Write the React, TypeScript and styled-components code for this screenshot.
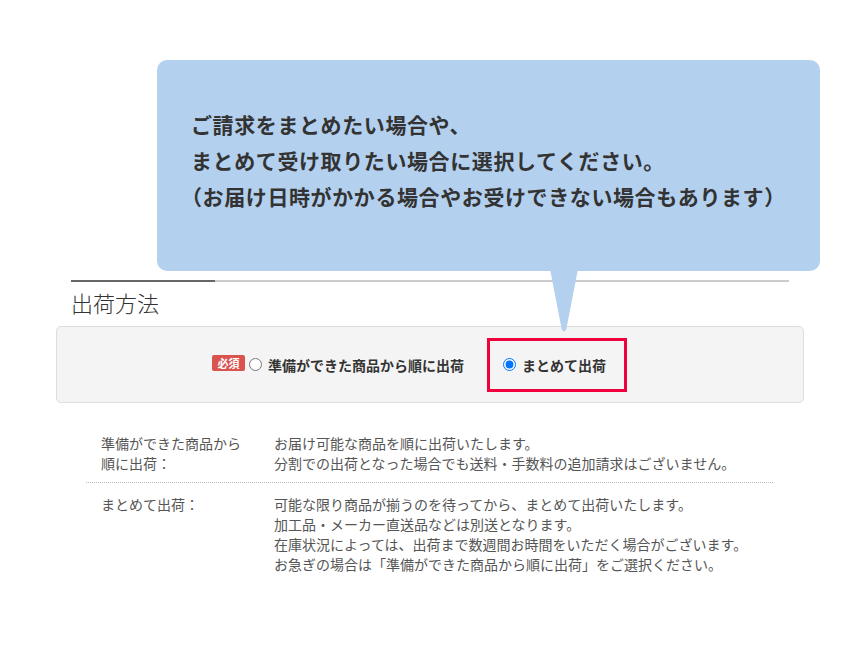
import React from "react";
import styled, { createGlobalStyle } from "styled-components";

const GlobalStyle = createGlobalStyle`
  html, body {
    margin: 0;
    padding: 0;
    background: #fff;
  }
  body {
    font-family: "Noto Sans CJK JP", "Noto Sans", sans-serif;
    color: #333;
  }
`;

const Page = styled.div`
  width: 860px;
  padding-top: 60px;
`;

const Bubble = styled.div`
  position: relative;
  margin-left: 157px;
  width: 663px;
  height: 211px;
  box-sizing: border-box;
  padding: 46px 0 0 34px;
  background: #b3d0ee;
  border-radius: 10px;
  font-size: 21px;
  font-weight: 700;
  line-height: 36px;
  color: #333;
  letter-spacing: 0.6px;
`;

const BubbleLine = styled.p<{ $paren?: boolean }>`
  margin: 0 0 0 ${({ $paren }) => ($paren ? "-10px" : "0")};
  white-space: nowrap;
`;

const Tail = styled.div`
  position: absolute;
  left: 393px;
  top: 209px;
  width: 28px;
  height: 63px;
  background: #b3d0ee;
  clip-path: polygon(0 0, 100% 0, 58% 96%, 50% 100%, 42% 96%);
`;

const Section = styled.section`
  margin: 9px 0 0 71px;
  width: 718px;
`;

const HeadLine = styled.div`
  height: 2px;
  background: linear-gradient(to right, #666 0 144px, #ccc 144px 100%);
`;

const Heading = styled.h2`
  margin: 0;
  padding-top: 2px;
  font-size: 22px;
  font-weight: 300;
  line-height: 36px;
  color: #333;
`;

const OptionBox = styled.div`
  margin: 6px 0 0 56px;
  width: 748px;
  height: 77px;
  box-sizing: border-box;
  background: #f4f4f4;
  border: 1px solid #ddd;
  border-radius: 5px;
  display: flex;
  align-items: center;
  padding-left: 155px;
`;

const Required = styled.span`
  display: inline-flex;
  align-items: center;
  justify-content: center;
  width: 33px;
  height: 16px;
  margin-top: -3px;
  background: #d9534f;
  border-radius: 2px;
  color: #fff;
  font-size: 11px;
  font-weight: 700;
  line-height: 1;
`;

const Choice = styled.label<{ $highlight?: boolean }>`
  display: flex;
  align-items: center;
  gap: 3px;
  font-size: 14px;
  font-weight: 700;
  color: #333;
  box-sizing: border-box;
  ${({ $highlight }) =>
    $highlight
      ? `
    margin-left: 23px;
    height: 54px;
    width: 140px;
    padding-left: 13px;
    border: 3px solid #f0003c;
  `
      : `
    margin-left: 4px;
  `}

  input {
    margin: 0 3px 0 0;
    width: 13px;
    height: 13px;
    accent-color: #0075ff;
  }
`;

const Notes = styled.div`
  margin: 20px 0 0 86px;
  width: 687px;
  padding-top: 10px;
  font-size: 14px;
  line-height: 20px;
  color: #555;
`;

const NoteRow = styled.div<{ $divider?: boolean }>`
  display: grid;
  grid-template-columns: 188px 1fr;
  padding: ${({ $divider }) => ($divider ? "11px 0 0" : "0 0 9px")};
  border-bottom: ${({ $divider }) => ($divider ? "none" : "1px dotted #bbb")};
`;

const NoteTerm = styled.div`
  padding: 0 23px 0 15px;
`;

const NoteBody = styled.div`
  white-space: nowrap;
`;

export default function App() {
  return (
    <>
      <GlobalStyle />
      <Page>
        <Bubble>
          <BubbleLine>ご請求をまとめたい場合や、</BubbleLine>
          <BubbleLine>まとめて受け取りたい場合に選択してください。</BubbleLine>
          <BubbleLine $paren>
            （お届け日時がかかる場合やお受けできない場合もあります）
          </BubbleLine>
          <Tail />
        </Bubble>
        <Section>
          <HeadLine />
          <Heading>出荷方法</Heading>
        </Section>
        <OptionBox>
          <Required>必須</Required>
          <Choice>
            <input type="radio" name="ship" />
            準備ができた商品から順に出荷
          </Choice>
          <Choice $highlight>
            <input type="radio" name="ship" defaultChecked />
            まとめて出荷
          </Choice>
        </OptionBox>
        <Notes>
          <NoteRow>
            <NoteTerm>準備ができた商品から順に出荷：</NoteTerm>
            <NoteBody>
              お届け可能な商品を順に出荷いたします。
              <br />
              分割での出荷となった場合でも送料・手数料の追加請求はございません。
            </NoteBody>
          </NoteRow>
          <NoteRow $divider>
            <NoteTerm>まとめて出荷：</NoteTerm>
            <NoteBody>
              可能な限り商品が揃うのを待ってから、まとめて出荷いたします。
              <br />
              加工品・メーカー直送品などは別送となります。
              <br />
              在庫状況によっては、出荷まで数週間お時間をいただく場合がございます。
              <br />
              お急ぎの場合は「準備ができた商品から順に出荷」をご選択ください。
            </NoteBody>
          </NoteRow>
        </Notes>
      </Page>
    </>
  );
}
